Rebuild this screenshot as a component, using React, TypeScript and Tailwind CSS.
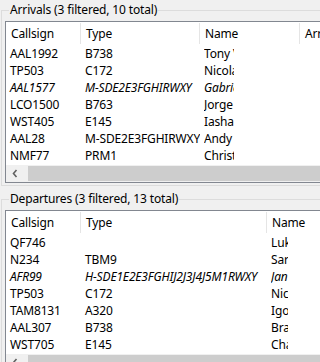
import { ReactNode } from "react";

type Row = {
  callsign: string;
  type: string;
  name: string;
  italic?: boolean;
};

type Column = {
  title: string;
  width: string;
};

const arrivals: Row[] = [
  { callsign: "AAL1992", type: "B738", name: "Tony Villa" },
  { callsign: "TP503", type: "C172", name: "Nicolas" },
  { callsign: "AAL1577", type: "M-SDE2E3FGHIRWXY", name: "Gabriel", italic: true },
  { callsign: "LCO1500", type: "B763", name: "Jorge" },
  { callsign: "WST405", type: "E145", name: "Iasharon" },
  { callsign: "AAL28", type: "M-SDE2E3FGHIRWXY", name: "Andy" },
  { callsign: "NMF77", type: "PRM1", name: "Christian" },
];

const departures: Row[] = [
  { callsign: "QF746", type: "", name: "Luke" },
  { callsign: "N234", type: "TBM9", name: "Sarah" },
  { callsign: "AFR99", type: "H-SDE1E2E3FGHIJ2J3J4J5M1RWXY", name: "Jan", italic: true },
  { callsign: "TP503", type: "C172", name: "Nicolas" },
  { callsign: "TAM8131", type: "A320", name: "Igor" },
  { callsign: "AAL307", type: "B738", name: "Bradley" },
  { callsign: "WST705", type: "E145", name: "Charlie" },
];

const GroupBox = ({ title, children }: { title: string; children: ReactNode }) => {
  return (
    <div className="relative border border-[#dcdcdc] pl-[3px] pt-[10px] pb-[2px]">
      <span className="absolute left-[7px] top-[-9px] bg-[#f0f0f0] px-[1px] leading-[16px] whitespace-nowrap">
        {title}
      </span>
      {children}
    </div>
  );
};

const ScrollBar = () => (
  <div className="flex h-[17px] bg-[#f0f0f0]">
    <div className="flex w-[17px] items-center justify-center">
      <svg width="6" height="9" viewBox="0 0 6 9">
        <path d="M4.5 1 L1.5 4.5 L4.5 8" fill="none" stroke="#606060" strokeWidth="1.6" />
      </svg>
    </div>
    <div className="my-px ml-[5px] flex-1 bg-[#cdcdcd]" />
  </div>
);

const Table = ({
  columns,
  rows,
  nameClip,
}: {
  columns: Column[];
  rows: Row[];
  nameClip: string;
}) => {
  return (
    <div className="border border-[#828790] bg-white">
      <div className="flex h-[23px] py-px">
        {columns.map((col) => (
          <div
            key={col.title}
            className={`${col.width} flex shrink-0 items-center border-r border-[#e5e5e5] pl-[5px] whitespace-nowrap`}
          >
            {col.title}
          </div>
        ))}
      </div>
      <div className="h-[120px]">
        {rows.map((row) => (
          <div
            key={row.callsign + row.name}
            className={`flex h-[17px] items-center whitespace-nowrap ${row.italic ? "italic" : ""}`}
          >
            <div className={`${columns[0].width} shrink-0 overflow-hidden pl-[4px]`}>{row.callsign}</div>
            <div className={`${columns[1].width} shrink-0 overflow-hidden pl-[4px]`}>{row.type}</div>
            <div className="shrink-0 pl-[4px]">
              <div className={`${nameClip} overflow-hidden`}>{row.name}</div>
            </div>
          </div>
        ))}
      </div>
      <ScrollBar />
    </div>
  );
};

export default function App() {
  return (
    <div className="h-[362px] w-[320px] overflow-hidden bg-[#f0f0f0] font-['Segoe_UI','Noto_Sans',sans-serif] text-[12px] tracking-[-0.15px] text-black">
      <div className="w-[380px] pl-[1px] pt-[10px]">
        <GroupBox title="Arrivals (3 filtered, 10 total)">
          <Table
            columns={[
              { title: "Callsign", width: "w-[75px]" },
              { title: "Type", width: "w-[119px]" },
              { title: "Name", width: "w-[100px]" },
              { title: "Arrival", width: "w-[80px]" },
            ]}
            rows={arrivals}
            nameClip="w-[30px]"
          />
        </GroupBox>
        <div className="mt-[13px]">
          <GroupBox title="Departures (3 filtered, 13 total)">
            <Table
              columns={[
                { title: "Callsign", width: "w-[75px]" },
                { title: "Type", width: "w-[186px]" },
                { title: "Name", width: "w-[100px]" },
              ]}
              rows={departures}
              nameClip="w-[17px]"
            />
          </GroupBox>
        </div>
      </div>
    </div>
  );
}
